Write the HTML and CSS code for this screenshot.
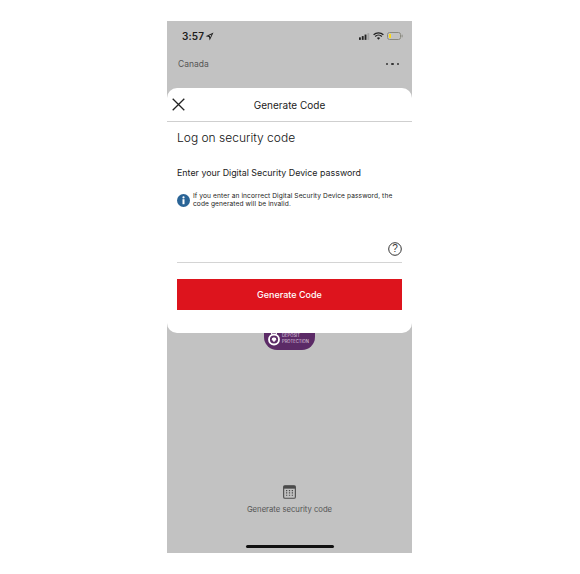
FILE: index.html
```html
<!DOCTYPE html>
<html lang="en">
<head>
<meta charset="utf-8">
<title>Generate Code</title>
<link rel="stylesheet" href="styles.css">
</head>
<body>
<main class="phone">
  <div class="status">
    <span class="time">3:57</span>
    <svg class="loc" width="9" height="9" viewBox="0 0 9 9"><path d="M8.500.5 L.6 4.200 L4 4.900 L4.700 8.400 Z M6.600 2.400 L3.600 3.900 L5 4.100 L5.200 5.400 Z" fill="#222" fill-rule="evenodd"/></svg>
    <span class="status-right">
      <svg width="11" height="7" viewBox="0 0 13 8"><rect x="0" y="5" width="2.200" height="3" fill="#222"/><rect x="3.300" y="3.500" width="2.200" height="4.500" fill="#222"/><rect x="6.600" y="1.700" width="2.200" height="6.300" fill="#222"/><rect x="9.900" y="0" width="2.200" height="8" fill="#a4a4a4"/></svg>
      <svg width="11" height="8" viewBox="0 0 11 8"><path d="M.6 2.800a7 7 0 0 1 9.800 0M2.200 4.500a4.700 4.700 0 0 1 6.600 0" fill="none" stroke="#222" stroke-width="1.300"/><path d="M3.900 5.900a2.300 2.300 0 0 1 3.200 0L5.500 7.700Z" fill="#222"/></svg>
      <svg width="16" height="8" viewBox="0 0 16 8"><rect x=".5" y=".5" width="13" height="7" rx="2" fill="none" stroke="#8a8a80"/><rect x="2" y="2" width="2" height="4" fill="#ffdc14"/><rect x="14.600" y="2.700" width="1" height="2.600" fill="#8a8a80"/></svg>
    </span>
  </div>
  <div class="topbar">
    <span class="region">Canada</span>
    <span class="dots"><i></i><i></i><i></i></span>
  </div>
  <div class="spacer"></div>
  <div class="footer-action">
    <svg class="calc" width="13" height="14" viewBox="0 0 14 15"><rect x=".7" y=".7" width="12.600" height="13.600" rx="1.500" fill="none" stroke="#4b4b4b" stroke-width="1.200"/><rect x=".7" y=".7" width="12.600" height="3.200" fill="#4b4b4b"/><path d="M3.200 6h1.400M6.300 6h1.400M9.400 6h1.400M3.200 8.500h1.400M6.300 8.500h1.400M9.400 8.500h1.400M3.200 11h1.400M6.300 11h1.400M9.400 11h1.400" stroke="#4b4b4b" stroke-width="1.200"/></svg>
    <span class="action-label">Generate security code</span>
  </div>
  <div class="home-bar"></div>

  <div class="badge">
    <svg width="14" height="20" viewBox="0 0 16 24"><path d="M4.500 9V3.500h1.600V8M11.500 9V3.500H9.900V8" fill="#fff"/><circle cx="8" cy="15" r="6" fill="none" stroke="#fff" stroke-width="2.200"/><path d="M8 11.600l1 1.600 1.600-.4-.4 1.800 1 .6-2.400 1.600.2 1H7l.2-1-2.400-1.600 1-.6-.4-1.800 1.600.4Z" fill="#fff"/></svg>
    <span class="badge-text">DEPOSIT<br>PROTECTION</span>
  </div>

  <section class="sheet">
    <header class="sheet-head">
      <svg class="close" width="13" height="13" viewBox="0 0 13 13"><path d="M.7.7l11.600 11.600M12.300.7L.7 12.300" stroke="#222" stroke-width="1.300" fill="none"/></svg>
      <h2 class="sheet-title">Generate Code</h2>
    </header>
    <div class="sheet-body">
      <h1 class="heading">Log on security code</h1>
      <p class="prompt">Enter your Digital Security Device password</p>
      <div class="notice">
        <svg class="info" width="13" height="13" viewBox="0 0 13 13"><circle cx="6.500" cy="6.500" r="6.500" fill="#2a6496"/><circle cx="6.500" cy="3.400" r="1.100" fill="#fff"/><rect x="5.500" y="5.200" width="2" height="5" fill="#fff"/></svg>
        <p class="notice-text">If you enter an incorrect Digital Security Device password, the code generated will be invalid.</p>
      </div>
      <div class="field">
        <svg width="14" height="14" viewBox="0 0 14 14"><circle cx="7" cy="7" r="6.300" fill="none" stroke="#333" stroke-width="1"/><text x="7" y="10.300" text-anchor="middle" class="q">?</text></svg>
      </div>
      <button class="primary" type="button">Generate Code</button>
    </div>
  </section>
</main>
</body>
</html>
```
FILE: styles.css
```css
html, body { margin: 0; padding: 0; background: #fff; }
body { font-family: Inter, "Liberation Sans", sans-serif; height: 574px; overflow: hidden; }
.phone {
  position: relative;
  width: 245px;
  height: 532px;
  margin: 21px 0 0 167px;
  background: #c2c2c2;
  display: flex;
  flex-direction: column;
}
.status {
  display: flex;
  align-items: center;
  height: 30px;
  padding: 0 9px 0 15px;
}
.time { font-size: 10px; font-weight: 600; color: #1c1c1c; letter-spacing: .1px; }
.loc { margin-left: 1px; }
.status-right { margin-left: auto; display: flex; align-items: center; gap: 3px; }
.topbar {
  display: flex;
  align-items: center;
  justify-content: space-between;
  height: 26px;
  padding: 0 13px 0 11px;
}
.region { font-size: 8.500px; color: #555; }
.dots { display: flex; gap: 3px; }
.dots i { width: 2.500px; height: 2.500px; border-radius: 50%; background: #333; }
.spacer { flex: 1; }
.footer-action { display: flex; flex-direction: column; align-items: center; gap: 6px; }
.action-label { font-size: 7.700px; color: #555; }
.home-bar { width: 88px; height: 3px; border-radius: 2px; background: #111; margin: 31px auto 5px; }
.badge {
  position: absolute;
  left: 97px;
  top: 300px;
  width: 51px;
  height: 29px;
  border-radius: 0 0 13px 13px;
  background: #5b2a66;
  display: flex;
  align-items: flex-end;
  padding: 0 0 4px 3px;
  box-sizing: border-box;
  gap: 1px;
}
.badge svg { flex: none; margin-bottom: -1px; }
.badge-text { font-size: 4.200px; line-height: 5.500px; color: #e0d5e2; margin-bottom: 2px; }
.sheet {
  position: absolute;
  left: 0;
  top: 67px;
  width: 245px;
  height: 245px;
  background: #fff;
  border-radius: 10px;
}
.sheet-head {
  position: relative;
  height: 33px;
  border-bottom: 1px solid #cfcfcf;
  display: flex;
  align-items: center;
  justify-content: center;
}
.close { position: absolute; left: 5px; top: 10px; }
.sheet-title { margin: 0; font-size: 10px; font-weight: 400; color: #222; }
.sheet-body { padding: 0 10px; }
.heading { margin: 8px 0 0; font-size: 12px; font-weight: 300; line-height: 16px; color: #111; }
.prompt { margin: 21px 0 0; font-size: 8.900px; line-height: 12px; color: #222; }
.notice { display: flex; align-items: flex-start; gap: 3px; margin-top: 14px; }
.info { flex: none; margin-top: 1px; }
.notice-text { margin: 0; font-size: 6.600px; line-height: 7.500px; color: #222; letter-spacing: .1px; }
.field {
  height: 39px;
  margin-top: 16px;
  padding-bottom: 6px;
  box-sizing: border-box;
  border-bottom: 1px solid #d4d4d4;
  display: flex;
  align-items: flex-end;
  justify-content: flex-end;
}
.q { font-size: 10px; fill: #333; font-family: "Liberation Sans", sans-serif; }
.primary {
  display: block;
  width: 100%;
  height: 31px;
  margin-top: 16px;
  border: 0;
  background: #dd141d;
  color: #fff;
  font: 500 9px Inter, "Liberation Sans", sans-serif;
}
```
